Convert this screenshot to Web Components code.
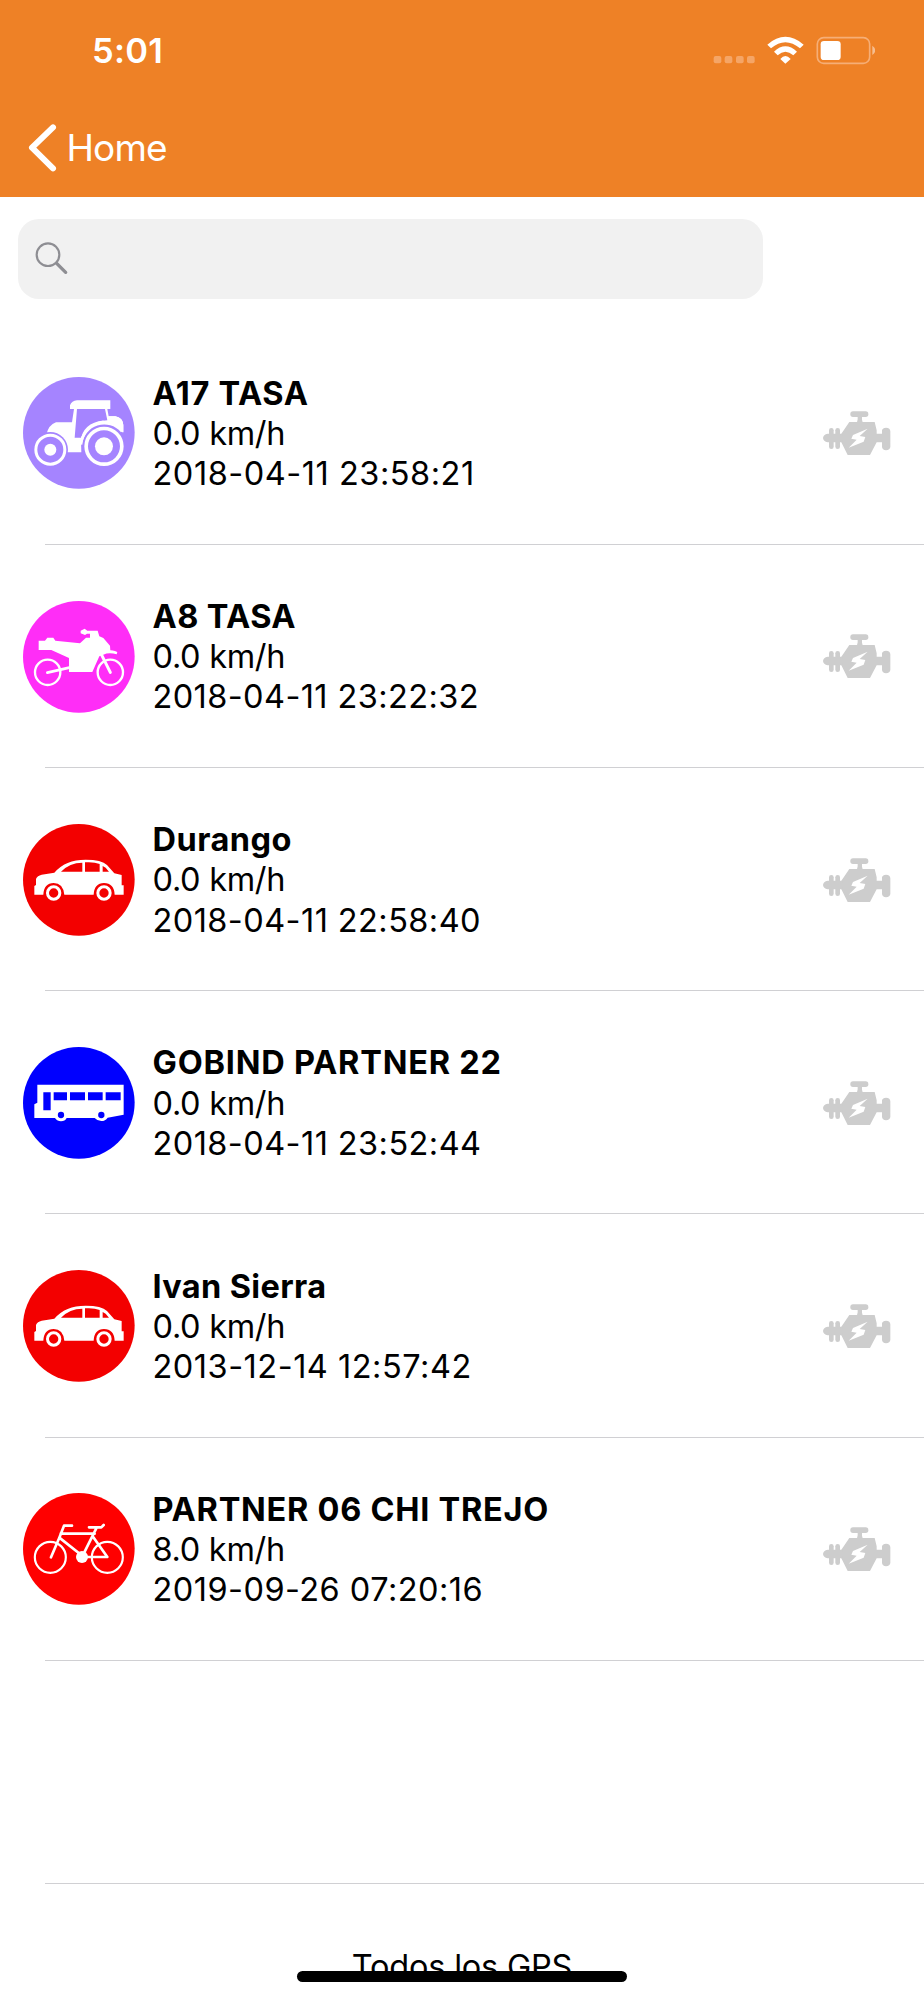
<!DOCTYPE html>
<html lang="es">
<head>
<meta charset="utf-8">
<title>GPS</title>
<style>
html, body { margin: 0; background: #fff; }
body { width: 924px; height: 2000px; overflow: hidden; font-family: Inter, "Liberation Sans", sans-serif; color: #000; }
</style>
</head>
<body>
<gps-app></gps-app>
<script>
const define = (name, html) => customElements.define(name, class extends HTMLElement {
  connectedCallback() {
    if (this.shadowRoot) return;
    const t = document.createElement('template');
    t.innerHTML = typeof html === 'function' ? html(this) : html;
    this.attachShadow({ mode: 'open' }).append(t.content.cloneNode(true));
  }
});

define('status-bar', `
<style>
:host { display: flex; justify-content: space-between; height: 101px; padding: 0 49px 0 92px; box-sizing: border-box; color: #fff; }
.time { font-size: 34.500px; line-height: 40px; font-weight: 600; margin-top: 31px; letter-spacing: .3px; white-space: nowrap; }
svg { display: block; margin-top: 20px; width: 165px; height: 70px; }
</style>
<div class="time">5:01</div>
<svg viewBox="61 0 495 210">
  <g fill="#f5a566"><rect x="72" y="108" width="23" height="22" rx="6"/><rect x="105" y="108" width="23" height="22" rx="6"/><rect x="139" y="108" width="23" height="22" rx="6"/><rect x="172" y="108" width="23" height="22" rx="6"/></g>
  <g fill="#fff">
    <path d="M233 74Q287 27 342 74L331 85Q287 48 244 85Z"/>
    <path d="M253 95Q287 63 322 95L311 106Q287 84 264 106Z"/>
    <path d="M272 117Q287 99 303 117L287 131Z"/>
    <rect x="393" y="63" width="60" height="57" rx="10"/>
  </g>
  <rect x="383" y="53" width="157" height="77" rx="19" fill="none" stroke="#f6ae76" stroke-width="5"/>
  <path d="M548 77Q557 83 557 91T548 105Z" fill="#f6bd8f"/>
</svg>`);

define('nav-bar', `
<style>
:host { display: flex; align-items: flex-start; height: 96px; padding-left: 27px; box-sizing: border-box; color: #fff; }
svg { display: block; width: 32px; height: 52px; margin-top: 20px; }
span { font-size: 37px; line-height: 44px; margin: 25px 0 0 7.500px; font-weight: 400; letter-spacing: -.9px; }
</style>
<svg viewBox="81 363 96 156"><path d="M159 382L96 443L159 505" fill="none" stroke="#fff" stroke-width="18" stroke-linecap="round" stroke-linejoin="round"/></svg>
<span><slot></slot></span>`);

define('search-field', `
<style>
:host { display: flex; box-sizing: border-box; width: 745px; height: 80px; margin: 22px 0 22.600px 18px; border-radius: 21px; background: #f1f1f1; }
svg { display: block; width: 36px; height: 36px; margin: 21px 0 0 15px; }
</style>
<svg viewBox="99 150 108 108"><g fill="none" stroke="#8e8e93"><circle cx="144" cy="194" r="34" stroke-width="6.500"/><path d="M170 220L197 247" stroke-width="10" stroke-linecap="round"/></g></svg>`);

const icons = {
  tractor: ['#a584ff', 21, `
    <path fill="#fff" d="M163 115V106Q168 93 184 91H284V117H275L279 139H299Q321 143 323 164V187L314 181Q303 165 265 158Q211 165 196 207L197 247H150Q146 208 104 197L91 196Q99 164 121 157H169L175 117H163Z"/>
    <path fill="#a584ff" d="M184 117H268L275 151Q219 154 196 203H177Z"/>
    <path fill="none" stroke="#fff" stroke-width="9" d="M198 217Q205 162 264 156"/>
    <circle cx="104" cy="239" r="53" fill="#a584ff"/><circle cx="104" cy="239" r="43.500" fill="none" stroke="#fff" stroke-width="9"/><circle cx="104" cy="239" r="18" fill="#fff"/>
    <circle cx="265" cy="229" r="66" fill="#a584ff"/><circle cx="265" cy="229" r="53.500" fill="none" stroke="#fff" stroke-width="11"/><circle cx="265" cy="229" r="27" fill="#fff"/>
    <path fill="none" stroke="#fff" stroke-width="8" d="M196 224A70 70 0 0 1 319 184"/>
    <path fill="#fff" d="M278 139H299Q323 144 323 166V187H319Q303 162 277 154Z"/>`],
  moto: ['#ff2df7', 30, `
    <path fill="#fff" d="M69 149H88L95 140H113L119 149L193 157L211 140H223V128H214L208 132L195 127V119L207 113L215 119H246L251 136L263 141L283 164L284 178Q300 179 305 184L303 190Q280 183 263 191L251 196L230 243H160V201L107 177H69Z"/>
    <g fill="none" stroke="#fff"><circle cx="96" cy="244" r="38" stroke-width="7"/><circle cx="284" cy="244" r="38" stroke-width="7"/><path d="M95 245L161 230" stroke-width="8" stroke-linecap="round"/><path d="M257 190L284 244" stroke-width="9" stroke-linecap="round"/></g>`],
  car: ['#f30000', 25, `
    <path fill="#fff" d="M56 237V211L61 208V190Q65 180 78 177L116 171Q149 132 210 132Q258 132 274 148L296 173L318 178V209H324V237H297Q295 202 265 202Q236 202 234 237H146Q142 202 114 202Q85 202 83 237Z"/>
    <path fill="#f30000" d="M136 168Q162 141 200 141V168ZM208 140Q235 138 252 145V168H208ZM261 151L270 156L280 168H261Z"/>
    <g fill="none" stroke="#fff" stroke-width="9"><circle cx="114" cy="232" r="18.500"/><circle cx="265" cy="232" r="18.500"/></g>`],
  bus: ['#0000ff', 20, `
    <path fill="#fff" d="M65 133H324V223L276 232Q269 242 257 242Q245 242 237 233H153Q148 243 136 243Q125 243 118 233H56V192L65 187Z"/>
    <path fill="#0000ff" d="M83 156H105V210H83ZM114 156H154V180H114ZM163 156H208V180H163ZM217 156H261V180H217ZM270 156H315V180H270Z"/>
    <circle cx="136" cy="224" r="9.500" fill="#0000ff"/><circle cx="257" cy="224" r="9.500" fill="#0000ff"/>`],
  bike: ['#ff0000', 24, `
    <g fill="none" stroke="#fff"><circle cx="104" cy="217" r="46.500" stroke-width="6.500"/><circle cx="275" cy="217" r="46.500" stroke-width="6.500"/>
    <path d="M169 122H145L131 158L106 217M135 146H237M131 158L194 208M203 208L243 128M220 127H257L264 120M232 155L275 216H208" stroke-width="8" stroke-linecap="round" stroke-linejoin="round"/></g>
    <circle cx="199" cy="216" r="18" fill="#fff"/>`]
};

define('vehicle-icon', el => {
  const [color, top, art] = icons[el.getAttribute('kind')];
  return `
<style>:host { display: block; width: 111.67px; height: 111.67px; } svg { display: block; width: 100%; height: 100%; overflow: visible; }</style>
<svg viewBox="22 ${top} 335 335"><circle cx="189.500" cy="${top + 167.5}" r="167.500" fill="${color}"/>${art}</svg>`;
});

define('engine-icon', `
<style>:host { display: block; } svg { display: block; width: 90px; height: 70px; }</style>
<svg viewBox="0 0 270 210">
  <g fill="#cdcdcd">
    <path d="M118 66H194L200 91V101H216V91Q218 83 228 83Q241 84 241 94V141Q240 150 228 151Q217 150 216 141V127H200L180 165H113L94 127V101Z"/>
    <rect x="121" y="34" width="54" height="17" rx="8"/><path d="M143 49H156V59L158 67H141L143 58Z"/>
    <rect x="57" y="84" width="14" height="63" rx="7"/><rect x="76" y="84" width="14" height="63" rx="7"/>
    <path d="M98 101H53Q40 103 39 114Q40 124 53 127H98Z"/>
  </g>
  <path fill="#fff" d="M173 86L129 105L124 116L140 119L116 143L161 125L166 111L149 108Z"/>
</svg>`);

define('gps-row', el => `
<style>
:host { display: grid; grid-template-columns: 112px 1fr 90px; align-items: center; box-sizing: border-box; height: 223.2px; padding: 0 24px 0 22.5px; column-gap: 18px;
  background: linear-gradient(#d0d0d3, #d0d0d3) 45px 100% / 100% 1px no-repeat; }
.text { font-size: 32.500px; line-height: 40.2px; white-space: nowrap; padding-top: 2px; }
.speed { letter-spacing: -.3px; }
.name { font-weight: 700; letter-spacing: calc(var(--name-ls, .6px) - .23px); }
.date { letter-spacing: calc(var(--date-ls, .65px) - .22px); }
engine-icon { padding-top: 4px; }
</style>
<vehicle-icon kind="${el.getAttribute('kind')}"></vehicle-icon>
<div class="text"><div class="name"><slot></slot></div><div class="speed"><slot name="speed"></slot></div><div class="date"><slot name="date"></slot></div></div>
<engine-icon></engine-icon>`);

define('footer-row', `
<style>
:host { display: block; position: relative; height: 116px; }
.label { padding-top: 63.500px; font-size: 32.500px; line-height: 40px; text-align: center; letter-spacing: -.2px; }
.home { position: absolute; left: 297px; top: 87px; width: 330px; height: 11px; border-radius: 6px; background: #000; }
</style>
<div class="label"><slot></slot></div><div class="home"></div>`);

define('gps-app', `
<style>
:host { display: block; width: 924px; height: 2000px; overflow: hidden; background: #fff; }
header { background: #ee8126; height: 197px; }
.empty { height: 223.2px; background: linear-gradient(#d0d0d3, #d0d0d3) 45px 100% / 100% 1px no-repeat; }
</style>
<header><status-bar></status-bar><nav-bar>Home</nav-bar></header>
<search-field></search-field>
<main>
<gps-row kind="tractor" style="--name-ls:.9px;--date-ls:.75px">A17 TASA<span slot="speed">0.0 km/h</span><span slot="date">2018-04-11 23:58:21</span></gps-row>
<gps-row kind="moto" style="--name-ls:.62px;--date-ls:.62px">A8 TASA<span slot="speed">0.0 km/h</span><span slot="date">2018-04-11 23:22:32</span></gps-row>
<gps-row kind="car" style="--name-ls:.7px">Durango<span slot="speed">0.0 km/h</span><span slot="date">2018-04-11 22:58:40</span></gps-row>
<gps-row kind="bus" style="--name-ls:1px;--date-ls:.65px">GOBIND PARTNER 22<span slot="speed">0.0 km/h</span><span slot="date">2018-04-11 23:52:44</span></gps-row>
<gps-row kind="car" style="--name-ls:.58px;--date-ls:.73px">Ivan Sierra<span slot="speed">0.0 km/h</span><span slot="date">2013-12-14 12:57:42</span></gps-row>
<gps-row kind="bike" style="--name-ls:.96px;--date-ls:.68px">PARTNER 06 CHI TREJO<span slot="speed">8.0 km/h</span><span slot="date">2019-09-26 07:20:16</span></gps-row>
<div class="empty"></div>
</main>
<footer-row>Todos los GPS</footer-row>`);
</script>
</body>
</html>
